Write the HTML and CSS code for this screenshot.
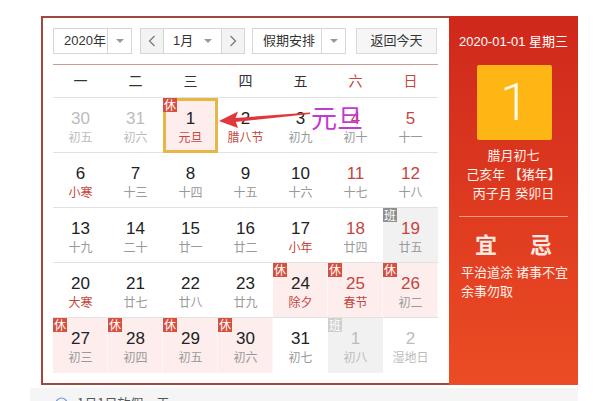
FILE: index.html
```html
<!DOCTYPE html>
<html lang="zh">
<head>
<meta charset="utf-8">
<title>万年历</title>
<link rel="stylesheet" href="styles.css">
</head>
<body>
<div class="page">
  <div class="cal">
    <div class="main">
      <div class="controls">
        <div class="select sel-year"><span class="sel-text">2020年</span><span class="sel-arrow"><i class="tri"></i></span></div>
        <div class="month">
          <span class="nav"><svg width="8" height="12" viewBox="0 0 8 12"><polyline points="6.5,1 1.5,6 6.5,11" fill="none" stroke="#777" stroke-width="1.2"/></svg></span>
          <span class="month-mid"><span>1月</span><i class="tri"></i></span>
          <span class="nav"><svg width="8" height="12" viewBox="0 0 8 12"><polyline points="1.5,1 6.5,6 1.5,11" fill="none" stroke="#777" stroke-width="1.2"/></svg></span>
        </div>
        <div class="select sel-hol"><span class="sel-text">假期安排</span><span class="sel-arrow"><i class="tri"></i></span></div>
        <div class="today-btn">返回今天</div>
      </div>
      <div class="weekdays">
        <span>一</span><span>二</span><span>三</span><span>四</span><span>五</span><span class="we">六</span><span class="we">日</span>
      </div>
      <div class="grid">
        <div class="cell other"><span class="n">30</span><span class="l">初五</span></div>
        <div class="cell other"><span class="n">31</span><span class="l">初六</span></div>
        <div class="cell rest cur"><i class="badge">休</i><span class="n">1</span><span class="l fest">元旦</span></div>
        <div class="cell"><span class="n">2</span><span class="l fest">腊八节</span></div>
        <div class="cell"><span class="n">3</span><span class="l">初九</span></div>
        <div class="cell we"><span class="n">4</span><span class="l">初十</span></div>
        <div class="cell we"><span class="n">5</span><span class="l">十一</span></div>

        <div class="cell"><span class="n">6</span><span class="l fest">小寒</span></div>
        <div class="cell"><span class="n">7</span><span class="l">十三</span></div>
        <div class="cell"><span class="n">8</span><span class="l">十四</span></div>
        <div class="cell"><span class="n">9</span><span class="l">十五</span></div>
        <div class="cell"><span class="n">10</span><span class="l">十六</span></div>
        <div class="cell we"><span class="n">11</span><span class="l">十七</span></div>
        <div class="cell we"><span class="n">12</span><span class="l">十八</span></div>

        <div class="cell"><span class="n">13</span><span class="l">十九</span></div>
        <div class="cell"><span class="n">14</span><span class="l">二十</span></div>
        <div class="cell"><span class="n">15</span><span class="l">廿一</span></div>
        <div class="cell"><span class="n">16</span><span class="l">廿二</span></div>
        <div class="cell"><span class="n">17</span><span class="l fest">小年</span></div>
        <div class="cell we"><span class="n">18</span><span class="l">廿四</span></div>
        <div class="cell we work"><i class="badge gray">班</i><span class="n">19</span><span class="l">廿五</span></div>

        <div class="cell"><span class="n">20</span><span class="l fest">大寒</span></div>
        <div class="cell"><span class="n">21</span><span class="l">廿七</span></div>
        <div class="cell"><span class="n">22</span><span class="l">廿八</span></div>
        <div class="cell"><span class="n">23</span><span class="l">廿九</span></div>
        <div class="cell rest"><i class="badge">休</i><span class="n">24</span><span class="l fest">除夕</span></div>
        <div class="cell rest we"><i class="badge">休</i><span class="n">25</span><span class="l fest">春节</span></div>
        <div class="cell rest we"><i class="badge">休</i><span class="n">26</span><span class="l">初二</span></div>

        <div class="cell rest last"><i class="badge">休</i><span class="n">27</span><span class="l">初三</span></div>
        <div class="cell rest last"><i class="badge">休</i><span class="n">28</span><span class="l">初四</span></div>
        <div class="cell rest last"><i class="badge">休</i><span class="n">29</span><span class="l">初五</span></div>
        <div class="cell rest last"><i class="badge">休</i><span class="n">30</span><span class="l">初六</span></div>
        <div class="cell last"><span class="n">31</span><span class="l">初七</span></div>
        <div class="cell other work last"><i class="badge light">班</i><span class="n">1</span><span class="l">初八</span></div>
        <div class="cell other last"><span class="n">2</span><span class="l">湿地日</span></div>
      </div>
    </div>
    <div class="side">
      <div class="side-date">2020-01-01 星期三</div>
      <div class="big-day">1</div>
      <div class="lunar-info">
        <div>腊月初七</div>
        <div>己亥年 【猪年】</div>
        <div>丙子月 癸卯日</div>
      </div>
      <div class="side-line"></div>
      <div class="yiji"><span>宜</span><span>忌</span></div>
      <div class="yiji-text">
        <div>平治道涂 诸事不宜</div>
        <div>余事勿取</div>
      </div>
    </div>
  </div>
  <div class="notice">
    <svg class="notice-icon" width="13" height="13" viewBox="0 0 13 13"><circle cx="6.5" cy="6.5" r="5.5" fill="none" stroke="#6a8fd0" stroke-width="1.2"/></svg>
    <span>1月1日放假一天</span>
  </div>
  <svg class="arrow" width="606" height="401" viewBox="0 0 606 401">
    <polygon points="219,121 238,111.5 235,119.5 238,128" fill="#e0383a"/>
    <polygon points="235,118 310,112.5 310,114 235,122" fill="#e0383a"/>
  </svg>
  <div class="anno">元旦</div>
</div>
</body>
</html>
```

FILE: styles.css
```css
html, body {
  margin: 0;
  padding: 0;
  background: #fff;
}

body {
  font-family: "Liberation Sans", "Noto Sans CJK SC", sans-serif;
  color: #333;
}

.page {
  position: relative;
  width: 606px;
  height: 401px;
  overflow: hidden;
  box-sizing: border-box;
  padding: 16px 0 0 41px;
}

.cal {
  display: flex;
  width: 537px;
  height: 369px;
}

.main {
  width: 408px;
  box-sizing: border-box;
  border: 2px solid #a2473d;
  border-right: 0;
  padding: 10px 11px 10px 10px;
}

/* controls */
.controls {
  display: flex;
  height: 26px;
  font-size: 13px;
  line-height: 24px;
  color: #333;
}

.select {
  display: flex;
  box-sizing: border-box;
  border: 1px solid #d6d6d6;
  background: #fff;
}

.sel-year { width: 79px; margin-right: 8px; }
.sel-hol { width: 94px; margin-right: 10px; }

.sel-text {
  flex: 1;
  padding-left: 10px;
  white-space: nowrap;
}

.sel-arrow {
  width: 23px;
  border-left: 1px solid #d6d6d6;
  display: flex;
  align-items: center;
  justify-content: center;
}

.tri {
  display: block;
  width: 0;
  height: 0;
  border-left: 4px solid transparent;
  border-right: 4px solid transparent;
  border-top: 4px solid #9a9a9a;
}

.month {
  display: flex;
  width: 105px;
  margin-right: 7px;
  box-sizing: border-box;
  border: 1px solid #d6d6d6;
}

.nav {
  width: 22px;
  background: #f3f3f3;
  display: flex;
  align-items: center;
  justify-content: center;
}

.month-mid {
  flex: 1;
  display: flex;
  align-items: center;
  justify-content: space-between;
  padding: 0 9px 0 9px;
  border-left: 1px solid #d6d6d6;
  border-right: 1px solid #d6d6d6;
  background: #fff;
}

.today-btn {
  width: 81px;
  box-sizing: border-box;
  border: 1px solid #d9d9d9;
  background: #f6f6f6;
  text-align: center;
}

/* week header */
.weekdays {
  display: grid;
  grid-template-columns: repeat(7, 55px);
  margin-top: 10px;
  height: 34px;
  box-sizing: border-box;
  border-top: 1px solid #c99c95;
  border-bottom: 1px solid #e2e2e2;
  font-family: "Noto Sans CJK SC", sans-serif;
  font-size: 14px;
  line-height: 31px;
  text-align: center;
  color: #333;
}

.weekdays .we { color: #c4463e; }

/* grid */
.grid {
  display: grid;
  grid-template-columns: repeat(7, 55px);
  grid-auto-rows: 55px;
}

.cell {
  position: relative;
  box-sizing: border-box;
  border-bottom: 1px solid #e2e2e2;
  padding-top: 11px;
  text-align: center;
}

.cell.last { border-bottom: 0; }

.n {
  display: block;
  font-size: 17px;
  line-height: 20px;
  color: #222;
}

.l {
  display: block;
  font-family: "Noto Sans CJK SC", sans-serif;
  font-size: 12px;
  line-height: 16px;
  color: #999;
}

.cell.we .n { color: #c4463e; }
.l.fest { color: #c4463e; }

.cell.other .n,
.cell.other .l { color: #bcbcbc; }

.cell.rest {
  background: #fdeded;
  box-shadow: inset -1px 0 0 #fff6f6;
}

.cell.work { background: #f1f1f1; }

.cell.cur {
  border: 3px solid #e8b646;
  padding-top: 8px;
}

.badge {
  position: absolute;
  top: 0;
  left: 0;
  width: 14px;
  height: 14px;
  background: #d6503f;
  color: #fff;
  font-style: normal;
  font-family: "Noto Sans CJK SC", sans-serif;
  font-size: 12px;
  line-height: 14px;
  text-align: center;
}

.cell.cur .badge { top: -3px; left: -3px; }

.badge.gray { background: #8f8f8f; }
.badge.light { background: #cfcfcf; }

/* side panel */
.side {
  width: 129px;
  height: 369px;
  box-sizing: border-box;
  background: linear-gradient(#cf281c, #ec4c24);
  color: #fff;
  font-family: "Liberation Sans", "Noto Sans CJK SC", sans-serif;
  padding-top: 17px;
}

.side-date {
  font-size: 13px;
  line-height: 18px;
  text-align: center;
  color: #fff;
}

.big-day {
  width: 75px;
  height: 75px;
  margin: 14px 0 0 28px;
  background: #fdb614;
  border-radius: 2px;
  color: #fffbe8;
  font-family: "Roboto", "Liberation Sans", sans-serif;
  font-weight: 300;
  font-size: 52px;
  line-height: 75px;
  text-align: center;
}

.lunar-info {
  margin-top: 6px;
  font-size: 13px;
  line-height: 19px;
  text-align: center;
  color: #fff0ea;
}

.side-line {
  height: 1px;
  margin: 13px 10px 0 10px;
  background: #f39a86;
}

.yiji {
  display: flex;
  justify-content: center;
  gap: 33px;
  margin-top: 12px;
  font-family: "Noto Sans CJK SC", sans-serif;
  font-size: 22px;
  font-weight: 700;
  line-height: 28px;
  color: #fde9e2;
}

.yiji-text {
  margin-top: 5px;
  padding-left: 12px;
  font-family: "Noto Sans CJK SC", sans-serif;
  font-size: 13px;
  line-height: 19px;
  color: #fff0ea;
  white-space: nowrap;
}

/* notice under calendar */
.notice {
  display: flex;
  align-items: flex-start;
  gap: 9px;
  margin: 3px 0 0 -11px;
  width: 548px;
  height: 30px;
  box-sizing: border-box;
  padding: 7px 0 0 25px;
  background: #f5f5f5;
  font-family: "Noto Sans CJK SC", sans-serif;
  font-size: 13px;
  line-height: 16px;
  color: #555;
}

.notice-icon { flex: none; margin-top: 2px; }

/* annotation over the calendar */
.arrow {
  position: absolute;
  left: 0;
  top: 0;
  pointer-events: none;
}

.anno {
  position: absolute;
  left: 311px;
  top: 100px;
  font-family: "Noto Sans CJK SC", sans-serif;
  font-size: 26px;
  line-height: 34px;
  color: #c13ad4;
}
```
